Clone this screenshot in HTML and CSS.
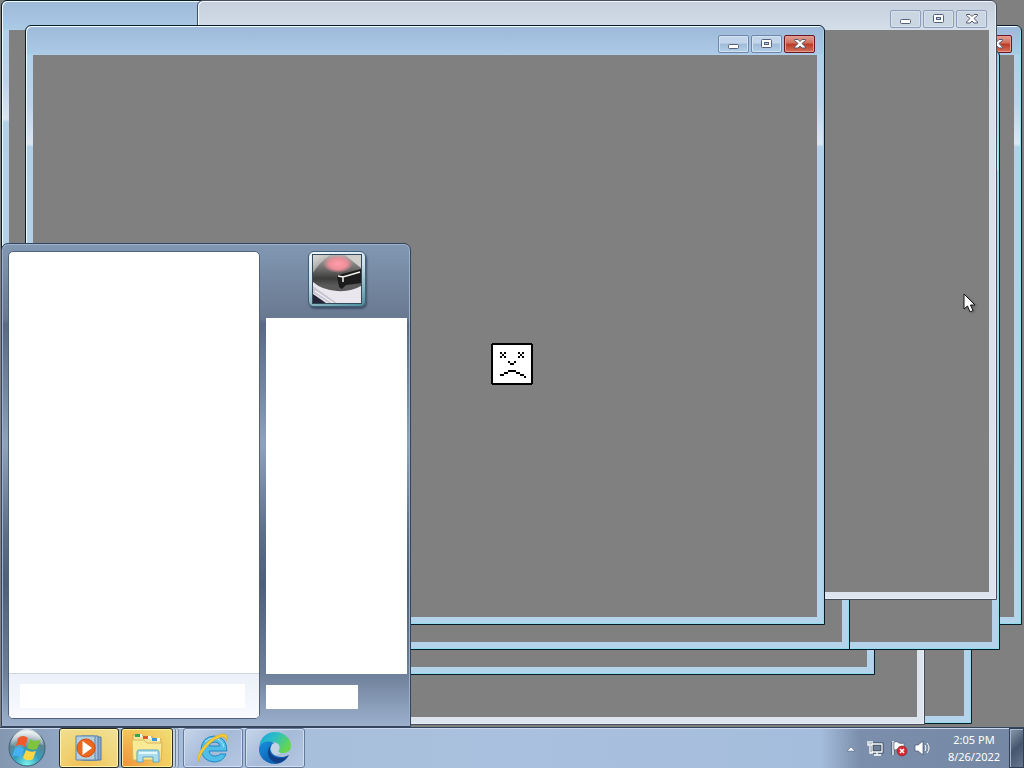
FILE: index.html
```html
<!DOCTYPE html>
<html lang="en">
<head>
<meta charset="utf-8">
<title>Desktop</title>
<link rel="stylesheet" href="styles.css">
</head>
<body>
<svg class="defs" aria-hidden="true">
  <symbol id="g-min" viewBox="0 0 14 12"><rect x="1.5" y="6.5" width="10" height="4" rx="1" fill="#fff" stroke="#53617a"/></symbol>
  <symbol id="g-max" viewBox="0 0 14 12"><rect x="1.500" y="1.500" width="10" height="8" rx="1" fill="#fff" stroke="#53617a"/><rect x="4.500" y="4.500" width="4" height="2" fill="#b8c8dc" stroke="#53617a"/></symbol>
  <symbol id="g-close" viewBox="0 0 14 12"><path d="M1.500 1.500h3.500l2 2 2-2h3.500v1l-3.500 3 3.500 3.500v1H9L7 8l-2 2H1.500V9l3.500-3.500-3.500-3z" fill="#fff" stroke="#56566c"/></symbol>
</svg>
<div class="screen">
  <main class="desktop">
    <section class="window w1" aria-label="Window 1"><header class="bar"></header><div class="client"></div></section>
    <section class="window w2 idle" aria-label="Window 2"><header class="bar"></header><div class="client"></div></section>
    <section class="window w3" aria-label="Window 3"><header class="bar"></header><div class="client"></div></section>
    <section class="window w4" aria-label="Window 4"><header class="bar"><button class="cap close" aria-label="Close"><svg><use href="#g-close"/></svg></button></header><div class="client"></div></section>
    <section class="window w5" aria-label="Window 5"><header class="bar"></header><div class="client"></div></section>
    <section class="window w6" aria-label="Window 6"><header class="bar"></header><div class="client"></div></section>
    <section class="window w7" aria-label="Window 7"><header class="bar"></header><div class="client"></div></section>
    <section class="window w8 idle" aria-label="Window 8">
      <header class="bar">
        <button class="cap" aria-label="Minimize"><svg><use href="#g-min"/></svg></button>
        <button class="cap" aria-label="Maximize"><svg><use href="#g-max"/></svg></button>
        <button class="cap close" aria-label="Close"><svg><use href="#g-close"/></svg></button>
      </header>
      <div class="client"></div>
    </section>
    <section class="window w9" aria-label="Window 9">
      <header class="bar">
        <button class="cap" aria-label="Minimize"><svg><use href="#g-min"/></svg></button>
        <button class="cap" aria-label="Maximize"><svg><use href="#g-max"/></svg></button>
        <button class="cap close" aria-label="Close"><svg><use href="#g-close"/></svg></button>
      </header>
      <div class="client"></div>
    </section>

    <svg class="sad" viewBox="0 0 42 42" role="img" aria-label="Crashed page" shape-rendering="crispEdges">
      <path d="M1 0h40v1h1v40h-1v1H1v-1H0V1h1z" fill="#000"/>
      <rect x="2" y="2" width="38" height="38" fill="#fff"/>
      <path d="M9 9h2v2H9zM13 9h2v2h-2zM11 11h2v2h-2zM9 13h2v2H9zM13 13h2v2h-2zM27 9h2v2h-2zM31 9h2v2h-2zM29 11h2v2h-2zM27 13h2v2h-2zM31 13h2v2h-2zM17 18h2v2h-2zM23 18h2v2h-2zM19 20h4v2h-4zM17 27h8v2h-8zM13 29h4v2h-4zM25 29h4v2h-4zM9 31h4v2H9zM29 31h4v2h-4zM33 33h2v2h-2z"/>
    </svg>

    <aside class="start-menu" aria-label="Start menu">
      <div class="programs">
        <div class="program-list"></div>
        <div class="search"><input type="search" aria-label="Search programs and files"></div>
      </div>
      <div class="places">
        <button class="avatar" aria-label="User account">
          <svg viewBox="0 0 48 48">
            <defs>
              <linearGradient id="av" x1="0" y1="0" x2="0" y2="1"><stop offset="0" stop-color="#b4b3b0"/><stop offset=".35" stop-color="#72716f"/><stop offset=".65" stop-color="#3c3c3b"/><stop offset=".85" stop-color="#5a5a5a"/></linearGradient>
              <radialGradient id="pk"><stop offset="0" stop-color="#ff9ea9"/><stop offset=".6" stop-color="#eb8e98"/><stop offset="1" stop-color="#eb8e98" stop-opacity="0"/></radialGradient>
              <linearGradient id="cr" x1="0" y1="0" x2="1" y2="1"><stop offset="0" stop-color="#d8d7d3"/><stop offset="1" stop-color="#d8d7d3" stop-opacity="0"/></linearGradient>
            </defs>
            <rect width="48" height="48" fill="#e9e6ee"/>
            <path d="M0 0h48v31q-10 6-24 5Q9 35 0 27z" fill="url(#av)"/>
            <path d="M0 0h17Q6 8 0 18z" fill="url(#cr)"/>
            <path d="M32 0h16v13z" fill="#cfcecb"/>
            <ellipse cx="25" cy="9" rx="15" ry="9" fill="url(#pk)"/>
            <path d="M24 21l5-2 19-5v14l-15 2-4 4-3-2z" fill="#1c1c1c"/>
            <path d="M25 21l5 1 17-5M30 21v6" fill="none" stroke="#f1f1ed" stroke-width="1.500"/>
            <path d="M0 31l24 17h-8L0 38z" fill="#c9c7d2"/>
            <path d="M0 39l13 9H0z" fill="#242638"/><path d="M2 36l18 12" stroke="#fff" stroke-width="1"/>
          </svg>
        </button>
        <div class="place-list"></div>
        <button class="shutdown" aria-label="Shut down"></button>
      </div>
    </aside>

    <svg class="cursor" viewBox="0 0 14 20" aria-hidden="true"><path d="M1 1v15l3.500-3 2.500 6 3-1.500-2.500-5.500H12z" fill="#fff" stroke="#111"/></svg>
  </main>

  <footer class="taskbar">
    <button class="orb" aria-label="Start">
      <svg viewBox="0 0 40 40">
        <defs>
          <radialGradient id="ob" cx=".5" cy=".95" r=".9"><stop offset="0" stop-color="#7af2ea"/><stop offset=".4" stop-color="#349ebd"/><stop offset=".75" stop-color="#5b8490"/><stop offset="1" stop-color="#c6d3d6"/></radialGradient>
          <linearGradient id="sh" x1="0" y1="0" x2="0" y2="1"><stop offset="0" stop-color="#fff" stop-opacity=".8"/><stop offset="1" stop-color="#fff" stop-opacity=".08"/></linearGradient>
        </defs>
        <circle cx="20" cy="20" r="18" fill="url(#ob)" stroke="#425f76"/>
        <path d="M4 17a16 16 0 0 1 32 0q-8-2-16 1T4 17z" fill="url(#sh)"/>
        <path d="M11 10q5-4 10 0l-3 9q-4-4-9-1z" fill="#ee5a2c"/>
        <path d="M23 11q5 4 11 0l-4 10q-5 2-10-1z" fill="#7fc43a"/>
        <path d="M8 20q5-3 9 1l-3 9q-4-4-9-1z" fill="#46b0f4"/>
        <path d="M19 22q5 3 10 1l-3 8q-5 3-10-1z" fill="#fdd646"/>
      </svg>
    </button>
    <nav class="tasks" aria-label="Running programs">
      <button class="task alert" aria-label="Windows Media Player">
        <svg viewBox="0 0 34 32">
          <path d="M12 5h17v23H12z" fill="#87a9ce" stroke="#50779f"/><path d="M9 4h17v24H9z" fill="#a4c2e2" stroke="#587da4"/><path d="M4 4h19v24H4z" fill="#b7ceda" stroke="#5789b1"/>
          <circle cx="14" cy="16" r="9" fill="#ed681c" stroke="#cc4f12"/><path d="M10.500 9v14L20 16z" fill="#fff"/>
        </svg>
      </button>
      <button class="task alert stacked" aria-label="Windows Explorer">
        <svg viewBox="0 0 34 32">
          <path d="M3 3h9l2 2h9l2 2h6v21H3z" fill="#f8e49a" stroke="#d1a94c"/>
          <path d="M5 2h5v3H5z" fill="#32a84a"/><path d="M13 4h6v3h-6z" fill="#e4542d"/><path d="M22 6h5v3h-5z" fill="#3c96dc"/><path d="M10 2h2v3h-2zM18 4h3v3h-3zM27 6h3v3h-3z" fill="#fff"/>
          <path d="M2 8h12l3 3h15l-1 17H3z" fill="#fae995" stroke="#d8b75b"/>
          <path d="M7 30V20q0-2 2-2h18q2 0 2 2v10h-6v-5H13v5z" fill="#a9dced" stroke="#5da7c8"/><path d="M9 21h18" stroke="#e3f8ff" stroke-width="2"/>
        </svg>
      </button>
      <button class="task" aria-label="Internet Explorer">
        <svg viewBox="0 0 34 32">
          <path d="M31 19H13q1 5 6 5 4 0 5-2h6q-3 8-12 8Q6 29 5 17 6 5 18 4q13 1 13 15zM13 14h11q-1-4-5-4-5 0-6 4z" fill="#51bde9" stroke="#2389c4"/>
          <path d="M9 10q4-4 9-4 8 1 10 9" fill="none" stroke="#b7effb" stroke-width="1"/>
          <path d="M3 30C-3 22 17 1 28 2q5 1 2 7 0-5-5-4C15 8 4 20 3 30z" fill="#f7cb32" stroke="#dea629" stroke-width=".6"/>
        </svg>
      </button>
      <button class="task" aria-label="Microsoft Edge">
        <svg viewBox="0 0 34 32">
          <defs>
            <linearGradient id="e1" x1="0" y1="0" x2="1" y2=".5"><stop offset="0" stop-color="#1ba0dd"/><stop offset=".5" stop-color="#2dbfc4"/><stop offset="1" stop-color="#66d64f"/></linearGradient>
            <linearGradient id="e2" x1="0" y1="0" x2="1" y2="1"><stop offset="0" stop-color="#1590df"/><stop offset="1" stop-color="#0c4c9b"/></linearGradient>
          </defs>
          <circle cx="18" cy="17" r="6" fill="#c3d2e6"/>
          <path d="M1 16C2 5 9 0 17 0c10 0 16 7 16 14 0 5-4 7-8 7-5 0-5-2-4-3 2-4-1-8-6-8C7 10 2 13 1 16z" fill="url(#e1)"/>
          <path d="M1 16c2-6 9-8 15-5-5 2-5 10 2 13 5 2 9 1 13-1-3 6-9 9-14 9C8 32 0 25 1 16z" fill="url(#e2)"/>
          <path d="M14 13c-5 5-1 13 9 13 4 0 7-2 8-3 0 0-4 6-11 8-11-2-13-14-6-18z" fill="#123f88"/>
        </svg>
      </button>
    </nav>
    <div class="tray">
      <button class="tray-icon" aria-label="Show hidden icons"><svg viewBox="0 0 16 16"><path d="M4 11l4-4 4 4z" fill="#fff" stroke="#4b5c76" stroke-width=".5"/></svg></button>
      <button class="tray-icon" aria-label="Network"><svg viewBox="0 0 16 16"><path d="M5 4h10v8H5z" fill="#6e8097" stroke="#34445a" stroke-width="3"/><path d="M5 4h10v8H5zM7 15h7M10 12v3M1 1v4h4V1M3 1v3M3 6v7h3" fill="none" stroke="#fff" stroke-width="1.300"/></svg></button>
      <button class="tray-icon" aria-label="Action Center"><svg viewBox="0 0 16 16"><path d="M2 2v13" stroke="#3e4c60" stroke-width="3"/><path d="M2 1v14" stroke="#fff" stroke-width="1.500"/><path d="M3 2q3-1 5 1 2 1 5 0v7q-3 1-5 0-2-1-5 0z" fill="#fff" stroke="#45546a" stroke-width=".6"/><circle cx="11" cy="11" r="5" fill="#d62a32" stroke="#8f1720" stroke-width=".6"/><path d="M9 9l4 4M13 9l-4 4" stroke="#fff" stroke-width="1.600"/></svg></button>
      <button class="tray-icon" aria-label="Volume"><svg viewBox="0 0 16 16"><path d="M0 5h3l5-4v14l-5-4H0z" fill="#fff" stroke="#42526a" stroke-width=".7"/><path d="M10 5q2 3 0 6M12 3q4 5 0 10" fill="none" stroke="#fff"/></svg></button>
      <time class="clock" datetime="2022-08-26T14:05"><span>2:05 PM</span><span>8/26/2022</span></time>
      <button class="show-desktop" aria-label="Show desktop"></button>
    </div>
  </footer>
</div>
</body>
</html>
```

FILE: styles.css
```css
* { box-sizing: border-box; }

body {
  margin: 0;
  font-family: "Noto Sans", "Open Sans", sans-serif;
  font-size: 11px;
}

button { padding: 0; font: inherit; }
.defs { position: absolute; width: 0; height: 0; }

.screen {
  display: flex;
  flex-direction: column;
  height: 100vh;
  overflow: hidden;
  background: #808080;
}

.desktop { position: relative; flex: 1; min-height: 0; }

/* Windows */
.window {
  position: absolute;
  display: flex;
  flex-direction: column;
  width: 800px;
  height: 600px;
  padding: 0 6px 6px;
  border: 1px solid #061c28;
  border-radius: 6px 6px 0 0;
  background:
    linear-gradient(#9db9d9, #abcae6 28px, transparent 29px),
    linear-gradient(#b1d0e9 30px, #bed3ec 80px, #dce6f3 118px, #b2d0e8 121px, #b4d4ec);
  box-shadow: inset 1px 1px #f4fbff, inset -1px -1px #93dcee;
}

.window.idle {
  border-color: #454d5e;
  background: linear-gradient(#c6d0dd, #d5dfea 30px, #dce4ee);
  box-shadow: inset 1px 1px #f3f7fb, inset -1px -1px #e9eef5;
}

.w1 { left: 172px; top: 124px; }
.w2 { left: 125px; top: 125px; }
.w3 { left: 1px; top: 0; }
.w4 { left: 222px; top: 25px; }
.w5 { left: 75px; top: 75px; }
.w6 { left: 200px; top: 50px; }
.w7 { left: 50px; top: 50px; }
.w8 { left: 197px; top: 0; }
.w9 { left: 25px; top: 25px; }

/* The far-left window is raised above the cascade but stays below the front pair. */
.w3 { z-index: 1; }
.w8, .w9, .sad { z-index: 2; }
.start-menu, .cursor { z-index: 3; }

.bar {
  display: flex;
  flex: none;
  justify-content: flex-end;
  gap: 2px;
  height: 29px;
  padding: 9px 3px 0;
}

.client { flex: 1; margin: 0 1px 1px; background: #808080; }

.cap {
  display: grid;
  place-items: center;
  width: 31px;
  height: 18px;
  border: 1px solid #6d86a9;
  border-radius: 2px;
  background: linear-gradient(#c2d5ea 45%, #9fbbd8 50%, #b4d0e8);
  box-shadow: inset 0 0 0 1px #d4e3f3;
}

.cap svg { width: 14px; height: 12px; }

.cap.close {
  border-color: #6b1622;
  background: linear-gradient(#e0a194, #cf6c5a 45%, #b93a25 50%, #d3705a);
  box-shadow: inset 0 0 0 1px #e39b8f;
}

.idle .cap {
  border-color: #8e9dbb;
  background: #cbd6e3;
  box-shadow: inset 0 0 0 1px #d7e0eb;
}

.sad {
  position: absolute;
  left: calc(50% - 21px);
  top: calc(50% - 21px);
  width: 42px;
  height: 42px;
}

.cursor {
  position: absolute;
  left: 963px;
  top: 293px;
  width: 14px;
  height: 20px;
  filter: drop-shadow(2px 1px 1px #5558);
}

/* Start menu */
.start-menu {
  position: absolute;
  left: 1px;
  bottom: 0;
  display: flex;
  gap: 6px;
  width: 410px;
  height: 484px;
  padding: 7px 3px 7px 6px;
  border: 1px solid #34445c;
  border-radius: 7px 7px 0 0;
  background: linear-gradient(#8298b3, #68788f 75px, #596984 80px, #7689a3 150px, #8fa2bc 200px, #5d6e87 290px, #4d5f79 340px, #6e8099 430px, #9cb0cd);
  box-shadow: inset 0 0 0 1px #9fb2cc;
}

.programs {
  display: flex;
  flex-direction: column;
  width: 252px;
  border: 1px solid #50627c;
  border-radius: 5px;
  overflow: hidden;
  background: #fff;
}

.program-list { flex: 1; }

.search {
  height: 45px;
  padding: 10px 14px 10px 11px;
  border-top: 1px solid #cdd4e0;
  background: linear-gradient(#ecf0f8, #f8faff);
}

.search input {
  display: block;
  width: 100%;
  height: 24px;
  border: 0;
  background: #fff;
}

.places { display: flex; flex: 1; flex-direction: column; align-items: flex-start; }

.avatar {
  align-self: center;
  width: 58px;
  height: 56px;
  margin-bottom: 11px;
  padding: 2px;
  border: 1px solid #415f75;
  border-radius: 6px;
  background: linear-gradient(160deg, #f2f9ff, #c8dfea 45%, #4a8d99);
  box-shadow: 1px 2px 2px #40506a;
}

.avatar svg { display: block; width: 50px; height: 50px; margin: auto; border: 1px solid #324a5a; }

.place-list { flex: 1; width: 100%; background: #fff; }

.shutdown { width: 92px; height: 24px; margin: 11px 0 10px; border: 0; background: #fff; }

/* Taskbar */
.taskbar {
  display: flex;
  flex: none;
  height: 41px;
  border-top: 1px solid #35465f;
  background: linear-gradient(90deg, #8497b0, #8fa5c1 56px, #a8bedb 190px, #a9c1de 500px, #a5bddc 820px, #7b8fac 860px, #7487a3);
  box-shadow: inset 0 1px #c8d7eb;
}

.orb {
  width: 54px;
  border: 0;
  background: none;
}

.orb svg { display: block; width: 40px; height: 40px; margin: 0 auto; }

.tasks { display: flex; gap: 2px; padding-left: 5px; }

.task {
  display: grid;
  place-items: center;
  width: 60px;
  height: 40px;
  border: 1px solid #65799a;
  border-radius: 3px;
  background: linear-gradient(135deg, #c6d5ea, #a5bad8 50%, #b5c8e2);
  box-shadow: inset 0 0 0 1px #d1def0;
}

.task svg { width: 34px; height: 32px; }

.task.alert {
  border-color: #292b21;
  background: radial-gradient(circle at 40% 110%, #f3bd52, #f0d57a 55%, #f0e29a);
  box-shadow: inset 0 0 0 1px #fff3af;
}

.task.stacked {
  width: 52px;
  margin-right: 8px;
  background: radial-gradient(circle at 0 100%, #f09038, #f3c65a 60%, #efe07a);
  box-shadow: inset 0 0 0 1px #ffef9c, 2px 0 #c4d3e6, 3px 0 #667b9c, 5px 0 #becde2, 6px 0 #7c90ae;
}

.tray {
  display: flex;
  align-items: center;
  margin-left: auto;
}

.tray-icon { width: 24px; height: 24px; border: 0; background: none; }
.tray-icon svg { display: block; width: 16px; height: 16px; margin: auto; overflow: visible; }

.clock {
  display: flex;
  flex-direction: column;
  width: 74px;
  padding-left: 4px;
  color: #fff;
  line-height: 17px;
  text-align: center;
}

.show-desktop {
  align-self: stretch;
  width: 15px;
  border: 1px solid #2f3f57;
  background: linear-gradient(135deg, #8c9caf, #46566e 50%, #65768f);
  box-shadow: inset 1px 1px #a7b6c9;
}
```
